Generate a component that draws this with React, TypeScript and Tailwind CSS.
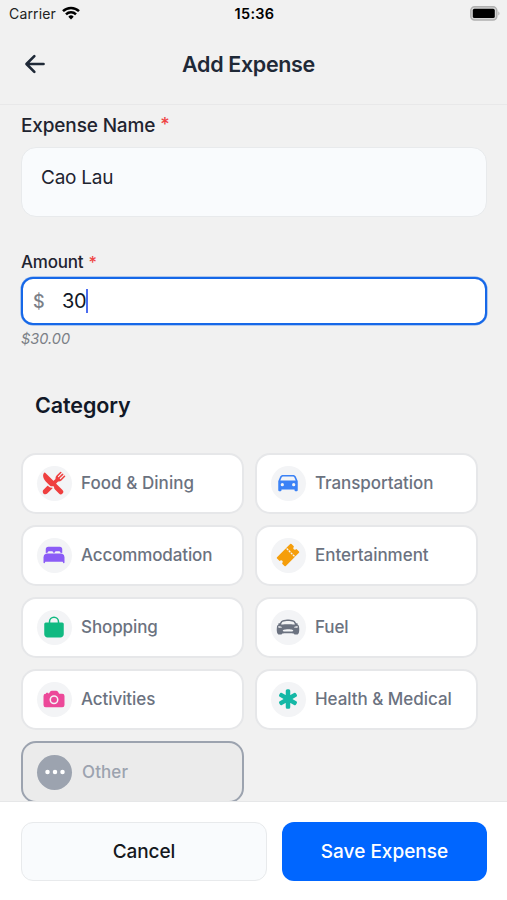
import type { ReactNode } from "react";
import type { IconType } from "react-icons";
import {
  IoRestaurant,
  IoCar,
  IoBed,
  IoTicket,
  IoBag,
  IoCarSport,
  IoCamera,
  IoMedical,
  IoEllipsisHorizontal,
  IoArrowBack,
} from "react-icons/io5";

type Category = { label: string; icon: IconType; iconStyle: string; spacing: string };

const categories: Category[] = [
  { label: "Food & Dining", icon: IoRestaurant, iconStyle: "size-6 text-[#ef3f3f]", spacing: "tracking-[0.05px]" },
  { label: "Transportation", icon: IoCar, iconStyle: "size-[26px] text-[#3b82f6]", spacing: "tracking-[-0.08px]" },
  { label: "Accommodation", icon: IoBed, iconStyle: "size-6 text-[#8b5cf6]", spacing: "tracking-[-0.13px]" },
  { label: "Entertainment", icon: IoTicket, iconStyle: "size-6 text-[#f59e0b]", spacing: "tracking-[-0.04px]" },
  { label: "Shopping", icon: IoBag, iconStyle: "size-6 text-[#10b981]", spacing: "tracking-[-0.1px]" },
  { label: "Fuel", icon: IoCarSport, iconStyle: "size-6 text-[#6b7280]", spacing: "tracking-[-0.1px]" },
  { label: "Activities", icon: IoCamera, iconStyle: "size-6 text-[#ec4899]", spacing: "tracking-[-0.08px]" },
  { label: "Health & Medical", icon: IoMedical, iconStyle: "size-6 text-[#14b8a6]", spacing: "tracking-[-0.04px]" },
];

function StatusBar() {
  return (
    <div className="grid h-7 shrink-0 grid-cols-3 items-center pr-[7px] pl-[9px] text-black">
      <div className="flex items-center gap-[6px]">
        <span className="text-[14px] leading-5 tracking-[0.15px] text-[#222]">Carrier</span>
        <svg className="-mt-0.5 h-[14px] w-[18px]" viewBox="0 0 18 14" fill="none" stroke="black" strokeWidth="2.5">
          <path d="M1 5.2a11.4 11.4 0 0 1 16 0" />
          <path d="M4 8.3a7.1 7.1 0 0 1 10 0" />
          <path d="M9 13.4 6.3 10.7a3.8 3.8 0 0 1 5.4 0Z" fill="black" stroke="none" />
        </svg>
      </div>
      <span className="text-center text-[14.5px] leading-5 font-semibold tracking-[0.3px]">15:36</span>
      <svg className="-mt-0.5 h-[15px] w-[30px] justify-self-end" viewBox="0 0 30 15">
        <rect x="0.8" y="0.8" width="26" height="13.2" rx="3.8" fill="#d5d5d5" stroke="#b0b0b0" strokeWidth="1.5" />
        <rect x="2.8" y="2.8" width="22" height="9.2" rx="1.6" fill="black" />
        <path d="M28.3 5.2c1.6.8 1.6 3.6 0 4.4Z" fill="#b0b0b0" />
      </svg>
    </div>
  );
}

function Label({ children, className }: { children: ReactNode; className: string }) {
  return (
    <label className={`flex items-center font-medium text-[#1f2430] ${className}`}>
      {children}
      <span className="mb-0.5 ml-[5px] text-[0.95em] text-[#ef4444]">*</span>
    </label>
  );
}

function CategoryCard({ item }: { item: Category }) {
  const Icon = item.icon;
  return (
    <button className="flex h-[61px] items-center rounded-[15px] border-2 border-[#e6e7e9] bg-white pl-3.5 text-left">
      <span className="flex size-[35px] items-center justify-center rounded-full bg-[#f3f4f6]">
        <Icon className={`mr-px mb-px ${item.iconStyle}`} />
      </span>
      <span className={`ml-[9px] pt-px text-[17px] font-medium text-[#6b7280] ${item.spacing}`}>{item.label}</span>
    </button>
  );
}

export default function App() {
  return (
    <div className="flex h-[900px] w-[507px] flex-col overflow-hidden bg-[#f1f1f1] font-['Inter',sans-serif]">
      <StatusBar />
      <header className="grid h-[77px] shrink-0 grid-cols-[80px_1fr_80px] items-center border-b border-[#e8e8e9] pb-[3px]">
        <button className="ml-[21px] w-fit pb-px">
          <IoArrowBack className="size-7 text-[#1f2937]" />
        </button>
        <h1 className="pr-[10px] pb-px text-center text-[21.5px] leading-7 font-semibold tracking-[-0.35px] text-[#1f2937]">
          Add Expense
        </h1>
      </header>

      <main className="flex min-h-0 flex-1 flex-col overflow-hidden px-5">
        <Label className="mt-[9px] h-6 pl-px text-[19px] tracking-[-0.15px]">Expense Name</Label>
        <div className="mt-[9px] ml-px h-[70px] shrink-0 rounded-[15px] border border-[#e8eaec] bg-[#f9fbfd] px-[19px] pt-4 text-[19px] leading-7 tracking-[-0.25px] text-[#1f2430]">
          Cao Lau
        </div>

        <Label className="mt-[34px] h-6 pl-px text-[17px] tracking-[-0.2px]">Amount</Label>
        <div className="mt-[2px] ml-px flex h-12 shrink-0 items-center rounded-xl border-2 border-[#1668e8] bg-white pl-[10px] ring-[0.5px] ring-[#1668e8]/60">
          <span className="w-[29px] text-[18px] font-medium text-[#7b7f88]">$</span>
          <span className="text-[20px] tracking-[-0.4px] text-[#111827]">30</span>
          <span className="h-6 w-0.5 bg-[#4a6cf0]" />
        </div>
        <p className="mt-1 h-5 pl-px text-[14.5px] leading-5 text-[#7b7f86] italic">$30.00</p>

        <h2 className="mt-10 h-8 pl-[15px] text-[21.5px] leading-8 font-semibold tracking-[-0.1px] text-[#111827]">Category</h2>
        <div className="mt-8 ml-px grid grid-cols-[223px_223px] gap-x-[11px] gap-y-[11px]">
          {categories.map((item) => (
            <CategoryCard key={item.label} item={item} />
          ))}
          <button className="flex h-[62px] items-center rounded-[15px] border-2 border-[#9ca3af] bg-[#ebebeb] pl-3.5 text-left">
            <span className="flex size-[35px] items-center justify-center rounded-full bg-[#9ca3af]">
              <IoEllipsisHorizontal className="size-6 text-white" />
            </span>
            <span className="ml-[10px] pt-px text-[17px] font-medium tracking-[0.1px] text-[#9ca3af]">Other</span>
          </button>
        </div>
      </main>

      <footer className="flex h-[99px] shrink-0 gap-[15px] border-t border-[#e6e7e8] bg-white px-5 pt-5">
        <button className="ml-px h-[59px] w-[246px] rounded-xl border border-[#e8eaec] bg-[#f9fbfd] pt-0.5 text-[19px] font-medium tracking-[-0.1px] text-[#16181d]">
          Cancel
        </button>
        <button className="h-[59px] w-[205px] rounded-xl bg-[#0066ff] pt-0.5 text-[19px] font-medium text-white">
          Save Expense
        </button>
      </footer>
    </div>
  );
}
